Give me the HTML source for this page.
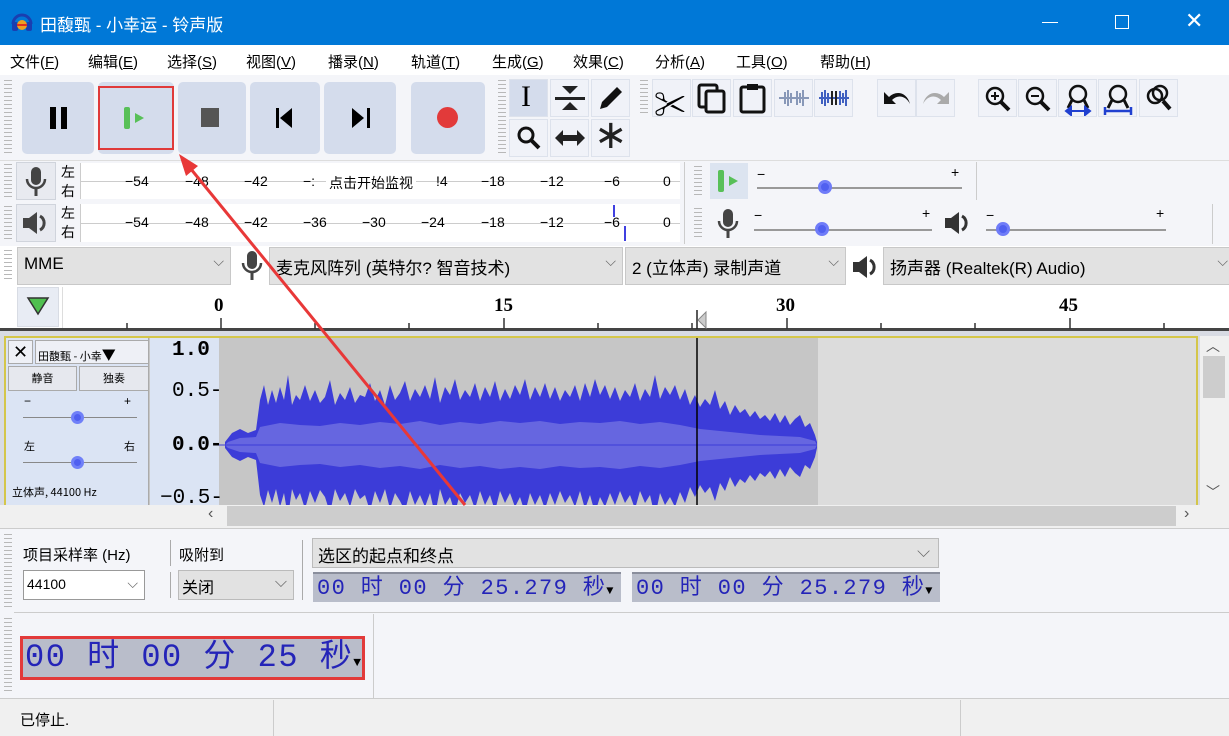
<!DOCTYPE html>
<html><head><meta charset="utf-8">
<style>
*{margin:0;padding:0;box-sizing:border-box}
body{width:1229px;height:736px;overflow:hidden;background:#f0f0f4;font-family:"Liberation Sans","Noto Sans CJK SC",sans-serif;position:relative;color:#000}
.a{position:absolute}
.btn{position:absolute;background:#d4dcec;border-radius:5px}
.tb{position:absolute;width:39px;height:38px;background:#f0f2f8;border:1px solid #dde2ec}
.grip{position:absolute;width:8px;background:repeating-linear-gradient(#b8b8b8 0 1px,transparent 1px 4px)}
.cb{position:absolute;background:#e2e2e2;border:1px solid #c8c8c8;font-size:17px;padding:6px 0 0 6px;height:38px}
.cb:after{content:"⌵";position:absolute;right:6px;top:5px;color:#666;font-size:14px}
.tc{position:absolute;background:#b9bdca;font-family:"Liberation Mono","Noto Sans CJK SC",monospace;color:#2424b8;white-space:nowrap;overflow:hidden}
.mt{position:absolute;font-size:14px;font-family:"Liberation Sans",sans-serif}
</style></head><body>
<div class="a" style="left:0;top:0;width:1229px;height:45px;background:#0078d7"></div>
<svg class="a" style="left:10px;top:10px" width="24" height="24" viewBox="0 0 24 24"><path d="M3 14 A9 9 0 0 1 21 14" stroke="#1a3fb0" stroke-width="3" fill="none"/><rect x="2" y="12" width="6" height="9" rx="2" fill="#1a3fb0"/><rect x="16" y="12" width="6" height="9" rx="2" fill="#1a3fb0"/><ellipse cx="12" cy="15" rx="5" ry="5" fill="#f0a020"/><rect x="7" y="14" width="10" height="2" fill="#e03020"/></svg>
<div class="a" style="left:40px;top:11px;color:#fff;font-size:17px">田馥甄 - 小幸运 - 铃声版</div>
<div class="a" style="left:1042px;top:22px;width:16px;height:1px;background:#fff"></div>
<div class="a" style="left:1115px;top:15px;width:14px;height:14px;border:1px solid #fff"></div>
<div class="a" style="left:1185px;top:8px;color:#fff;font-size:22px;font-weight:100">✕</div>
<div class="a" style="left:0;top:45px;width:1229px;height:30px;background:#fff;font-size:15px">
<span class="a" style="left:10px;top:6px">文件(<u>F</u>)</span><span class="a" style="left:88px;top:6px">编辑(<u>E</u>)</span><span class="a" style="left:167px;top:6px">选择(<u>S</u>)</span><span class="a" style="left:246px;top:6px">视图(<u>V</u>)</span><span class="a" style="left:328px;top:6px">播录(<u>N</u>)</span><span class="a" style="left:411px;top:6px">轨道(<u>T</u>)</span><span class="a" style="left:492px;top:6px">生成(<u>G</u>)</span><span class="a" style="left:573px;top:6px">效果(<u>C</u>)</span><span class="a" style="left:655px;top:6px">分析(<u>A</u>)</span><span class="a" style="left:736px;top:6px">工具(<u>O</u>)</span><span class="a" style="left:820px;top:6px">帮助(<u>H</u>)</span>
</div>
<div class="a" style="left:0;top:75px;width:1229px;height:85px;background:#f4f5f9"></div>
<div class="grip" style="left:4px;top:80px;height:75px"></div>
<div class="btn" style="left:22px;top:82px;width:72px;height:72px"></div>
<div class="a" style="left:50px;top:107px;width:6px;height:22px;background:#000"></div><div class="a" style="left:61px;top:107px;width:6px;height:22px;background:#000"></div>
<div class="btn" style="left:98px;top:82px;width:76px;height:72px"></div>
<svg class="a" style="left:120px;top:105px" width="30" height="26"><rect x="4" y="2" width="6" height="22" rx="2" fill="#58c058"/><path d="M15 8 L24 13 L15 18Z" fill="#58c058"/></svg>
<div class="a" style="left:98px;top:86px;width:76px;height:64px;border:2px solid #e03a3a"></div>
<div class="btn" style="left:178px;top:82px;width:68px;height:72px"></div>
<div class="a" style="left:201px;top:108px;width:18px;height:19px;background:#555"></div>
<div class="btn" style="left:250px;top:82px;width:70px;height:72px"></div>
<svg class="a" style="left:272px;top:106px" width="26" height="24"><rect x="4" y="2" width="3" height="20" fill="#000"/><path d="M20 2 L8 12 L20 22Z" fill="#000"/></svg>
<div class="btn" style="left:324px;top:82px;width:72px;height:72px"></div>
<svg class="a" style="left:348px;top:106px" width="26" height="24"><rect x="19" y="2" width="3" height="20" fill="#000"/><path d="M4 2 L16 12 L4 22Z" fill="#000"/></svg>
<div class="btn" style="left:411px;top:82px;width:74px;height:72px"></div>
<div class="a" style="left:437px;top:107px;width:21px;height:21px;border-radius:50%;background:#e23a3a"></div>
<div class="grip" style="left:498px;top:80px;height:75px"></div>
<div class="tb" style="left:509px;top:79px;background:#d4dcec"></div><div class="a" style="left:521px;top:80px;font-size:30px;font-family:'Liberation Serif'">I</div>
<div class="tb" style="left:550px;top:79px"></div><svg class="a" style="left:552px;top:82px" width="36" height="32"><path d="M10 4H26L18 12Z M10 28H26L18 20Z" fill="#222"/><rect x="3" y="15" width="30" height="3" fill="#222"/></svg>
<div class="tb" style="left:591px;top:79px"></div><svg class="a" style="left:596px;top:83px" width="30" height="30"><path d="M4 26 L6 19 L21 4 L26 9 L11 24Z" fill="#111"/></svg>
<div class="tb" style="left:509px;top:119px"></div><svg class="a" style="left:514px;top:123px" width="30" height="30"><circle cx="12" cy="12" r="7" stroke="#111" stroke-width="3" fill="none"/><path d="M17 17 L25 25" stroke="#111" stroke-width="4"/></svg>
<div class="tb" style="left:550px;top:119px"></div><svg class="a" style="left:553px;top:127px" width="34" height="22"><path d="M2 11 L10 3 V8 H24 V3 L32 11 L24 19 V14 H10 V19Z" fill="#222"/></svg>
<div class="tb" style="left:591px;top:119px"></div><div class="a" style="left:594px;top:112px;font-size:40px;color:#222">∗</div>
<div class="grip" style="left:640px;top:80px;height:36px"></div>
<div class="tb" style="left:652px;top:79px"></div><div class="a" style="left:654px;top:80px;font-size:32px">✂</div>
<div class="tb" style="left:692px;top:79px"></div><svg class="a" style="left:696px;top:82px" width="32" height="32"><rect x="3" y="3" width="18" height="22" rx="2" fill="none" stroke="#111" stroke-width="3"/><rect x="10" y="9" width="18" height="21" rx="2" fill="#f0f2f8" stroke="#111" stroke-width="3"/></svg>
<div class="tb" style="left:733px;top:79px"></div><svg class="a" style="left:738px;top:82px" width="30" height="32"><rect x="3" y="5" width="23" height="25" rx="2" fill="none" stroke="#111" stroke-width="3"/><rect x="9" y="2" width="11" height="6" fill="#111"/></svg>
<div class="tb" style="left:774px;top:79px"></div><svg class="a" style="left:777px;top:88px" width="34" height="20"><path d="M2 10H32" stroke="#8898b8" stroke-width="2"/><path d="M8 4V16M11 2V18M14 5V15M20 3V17M23 5V15M26 2V18" stroke="#8898b8" stroke-width="2"/></svg>
<div class="tb" style="left:814px;top:79px"></div><svg class="a" style="left:817px;top:88px" width="34" height="20"><path d="M2 10H32" stroke="#4060c0" stroke-width="2"/><path d="M5 4V16M8 2V18M11 5V15M23 3V17M26 5V15M29 2V18" stroke="#4060c0" stroke-width="2"/><path d="M15 3V17M19 3V17" stroke="#222" stroke-width="2"/></svg>
<div class="tb" style="left:877px;top:79px"></div><svg class="a" style="left:880px;top:86px" width="34" height="24"><path d="M4 6V18H16L12 14C18 8 26 10 30 18C27 6 16 4 9 11Z" fill="#111"/></svg>
<div class="tb" style="left:916px;top:79px"></div><svg class="a" style="left:919px;top:86px" width="34" height="24"><path d="M30 6V18H18L22 14C16 8 8 10 4 18C7 6 18 4 25 11Z" fill="#aaa"/></svg>
<div class="tb" style="left:978px;top:79px"></div><svg class="a" style="left:983px;top:84px" width="30" height="30"><circle cx="12" cy="12" r="8" stroke="#111" stroke-width="2.5" fill="none"/><path d="M18 18L26 26" stroke="#111" stroke-width="4"/><path d="M8 12H16M12 8V16" stroke="#111" stroke-width="2"/></svg>
<div class="tb" style="left:1018px;top:79px"></div><svg class="a" style="left:1023px;top:84px" width="30" height="30"><circle cx="12" cy="12" r="8" stroke="#111" stroke-width="2.5" fill="none"/><path d="M18 18L26 26" stroke="#111" stroke-width="4"/><path d="M8 12H16" stroke="#111" stroke-width="2"/></svg>
<div class="tb" style="left:1058px;top:79px"></div><svg class="a" style="left:1062px;top:82px" width="32" height="34"><circle cx="16" cy="12" r="8" stroke="#111" stroke-width="2.5" fill="none"/><path d="M10 18L6 26M22 18L26 26" stroke="#111" stroke-width="3"/><path d="M4 29H28M4 29L9 25V33ZM28 29L23 25V33Z" stroke="#2040d0" fill="#2040d0" stroke-width="2"/></svg>
<div class="tb" style="left:1098px;top:79px"></div><svg class="a" style="left:1102px;top:82px" width="32" height="34"><circle cx="16" cy="12" r="8" stroke="#111" stroke-width="2.5" fill="none"/><path d="M10 18L6 26M22 18L26 26" stroke="#111" stroke-width="3"/><path d="M3 29H29M3 25V33M29 25V33" stroke="#2040d0" stroke-width="2.5"/></svg>
<div class="tb" style="left:1139px;top:79px"></div><svg class="a" style="left:1143px;top:83px" width="32" height="32"><circle cx="12" cy="13" r="7" stroke="#111" stroke-width="2.5" fill="none"/><circle cx="17" cy="10" r="7" stroke="#111" stroke-width="2.5" fill="none"/><path d="M20 18L27 26" stroke="#111" stroke-width="4"/></svg>
<div class="a" style="left:0;top:160px;width:1229px;height:86px;background:#f4f5f9;border-top:1px solid #ddd"></div>
<div class="grip" style="left:4px;top:164px;height:34px"></div><div class="grip" style="left:4px;top:206px;height:34px"></div>
<div class="a" style="left:16px;top:162px;width:40px;height:38px;background:#e8eaf0;border:1px solid #d0d4dc"></div>
<svg class="a" style="left:24px;top:166px" width="24" height="32"><rect x="7" y="1" width="10" height="18" rx="5" fill="#444"/><path d="M3 13A9 9 0 0 0 21 13" stroke="#444" stroke-width="2.5" fill="none"/><path d="M12 22V30" stroke="#444" stroke-width="3"/></svg>
<div class="a" style="left:16px;top:204px;width:40px;height:38px;background:#e8eaf0;border:1px solid #d0d4dc"></div>
<svg class="a" style="left:20px;top:208px" width="30" height="30"><path d="M3 10H9L17 4V26L9 20H3Z" fill="#444"/><path d="M20 8A8 8 0 0 1 20 22" stroke="#444" stroke-width="3" fill="none"/></svg>
<div class="mt" style="left:61px;top:162px;font-family:'Noto Sans CJK SC'">左</div><div class="mt" style="left:61px;top:181px;font-family:'Noto Sans CJK SC'">右</div>
<div class="mt" style="left:61px;top:203px;font-family:'Noto Sans CJK SC'">左</div><div class="mt" style="left:61px;top:222px;font-family:'Noto Sans CJK SC'">右</div>
<div class="a" style="left:80px;top:163px;width:600px;height:36px;background:#fff;border-left:1px solid #ccc"></div>
<div class="a" style="left:80px;top:204px;width:600px;height:38px;background:#fff;border-left:1px solid #ccc"></div>
<div class="a" style="left:80px;top:181px;width:600px;height:1px;background:#ccc"></div>
<div class="a" style="left:80px;top:223px;width:600px;height:1px;background:#ccc"></div>
<div class="mt" style="left:125px;top:173px">−54</div><div class="mt" style="left:185px;top:173px">−48</div><div class="mt" style="left:244px;top:173px">−42</div><div class="mt" style="left:303px;top:173px">−:</div>
<div class="a" style="left:326px;top:173px;font-size:14px;background:#fff;padding:0 3px;font-family:'Noto Sans CJK SC'">点击开始监视</div>
<div class="mt" style="left:436px;top:173px">!4</div><div class="mt" style="left:481px;top:173px">−18</div><div class="mt" style="left:540px;top:173px">−12</div><div class="mt" style="left:604px;top:173px">−6</div><div class="mt" style="left:663px;top:173px">0</div>
<div class="mt" style="left:125px;top:214px">−54</div><div class="mt" style="left:185px;top:214px">−48</div><div class="mt" style="left:244px;top:214px">−42</div><div class="mt" style="left:303px;top:214px">−36</div><div class="mt" style="left:362px;top:214px">−30</div><div class="mt" style="left:421px;top:214px">−24</div><div class="mt" style="left:481px;top:214px">−18</div><div class="mt" style="left:540px;top:214px">−12</div><div class="mt" style="left:604px;top:214px">−6</div><div class="mt" style="left:663px;top:214px">0</div>
<div class="a" style="left:613px;top:205px;width:2px;height:12px;background:#4040e0"></div><div class="a" style="left:624px;top:226px;width:2px;height:15px;background:#4040e0"></div>
<div class="a" style="left:684px;top:162px;width:1px;height:82px;background:#ccc"></div>
<div class="grip" style="left:694px;top:166px;height:30px"></div><div class="grip" style="left:694px;top:208px;height:30px"></div>
<div class="a" style="left:710px;top:163px;width:38px;height:36px;background:#dce4f0"></div>
<svg class="a" style="left:714px;top:168px" width="30" height="26"><rect x="4" y="2" width="6" height="22" rx="2" fill="#58c058"/><path d="M15 8 L24 13 L15 18Z" fill="#58c058"/></svg>
<div class="a" style="left:757px;top:166px;font-size:14px">−</div><div class="a" style="left:951px;top:164px;font-size:14px">+</div>
<div class="a" style="left:757px;top:187px;width:205px;height:2px;background:#999"></div>
<div class="a" style="left:818px;top:180px;width:14px;height:14px;border-radius:50%;background:#5060f0;border:3px solid #6f7cf8"></div>
<div class="a" style="left:976px;top:162px;width:1px;height:38px;background:#ccc"></div>
<svg class="a" style="left:716px;top:208px" width="24" height="32"><rect x="7" y="1" width="10" height="18" rx="5" fill="#444"/><path d="M3 13A9 9 0 0 0 21 13" stroke="#444" stroke-width="2.5" fill="none"/><path d="M12 22V30" stroke="#444" stroke-width="3"/></svg>
<div class="a" style="left:754px;top:207px;font-size:14px">−</div><div class="a" style="left:922px;top:205px;font-size:14px">+</div>
<div class="a" style="left:754px;top:229px;width:178px;height:2px;background:#999"></div>
<div class="a" style="left:815px;top:222px;width:14px;height:14px;border-radius:50%;background:#5060f0;border:3px solid #6f7cf8"></div>
<svg class="a" style="left:942px;top:208px" width="30" height="30"><path d="M3 10H9L17 4V26L9 20H3Z" fill="#333"/><path d="M20 8A8 8 0 0 1 20 22" stroke="#333" stroke-width="3" fill="none"/></svg>
<div class="a" style="left:986px;top:207px;font-size:14px">−</div><div class="a" style="left:1156px;top:205px;font-size:14px">+</div>
<div class="a" style="left:986px;top:229px;width:180px;height:2px;background:#999"></div>
<div class="a" style="left:996px;top:222px;width:14px;height:14px;border-radius:50%;background:#5060f0;border:3px solid #6f7cf8"></div>
<div class="a" style="left:1212px;top:204px;width:1px;height:40px;background:#ccc"></div>
<div class="a" style="left:0;top:246px;width:1229px;height:40px;background:#fff"></div>
<div class="grip" style="left:4px;top:250px;height:32px"></div>
<div class="cb" style="left:17px;top:247px;width:214px">MME</div>
<svg class="a" style="left:240px;top:250px" width="24" height="32"><rect x="7" y="1" width="10" height="18" rx="5" fill="#444"/><path d="M3 13A9 9 0 0 0 21 13" stroke="#444" stroke-width="2.5" fill="none"/><path d="M12 22V30" stroke="#444" stroke-width="3"/></svg>
<div class="cb" style="left:269px;top:247px;width:354px">麦克风阵列 (英特尔? 智音技术)</div>
<div class="cb" style="left:625px;top:247px;width:221px">2 (立体声) 录制声道</div>
<svg class="a" style="left:850px;top:252px" width="30" height="30"><path d="M3 10H9L17 4V26L9 20H3Z" fill="#333"/><path d="M20 8A8 8 0 0 1 20 22" stroke="#333" stroke-width="3" fill="none"/></svg>
<div class="cb" style="left:883px;top:247px;width:352px">扬声器 (Realtek(R) Audio)</div>
<div class="a" style="left:0;top:286px;width:1229px;height:44px;background:#fff"></div>
<div class="a" style="left:17px;top:287px;width:42px;height:40px;background:#e8ecf4;border:1px solid #d8dce4"></div>
<svg class="a" style="left:26px;top:296px" width="24" height="20"><path d="M2 2H22L12 18Z" fill="#50c050" stroke="#333" stroke-width="1.5"/></svg>
<div class="a" style="left:62px;top:287px;width:1px;height:42px;background:#ddd"></div>
<div class="a" style="left:0;top:328px;width:1229px;height:3px;background:#444"></div>
<div class="a" style="left:214px;top:295px;font-size:19px;font-weight:bold;font-family:'Liberation Serif'">0</div>
<div class="a" style="left:494px;top:295px;font-size:19px;font-weight:bold;font-family:'Liberation Serif'">15</div>
<div class="a" style="left:776px;top:295px;font-size:19px;font-weight:bold;font-family:'Liberation Serif'">30</div>
<div class="a" style="left:1059px;top:295px;font-size:19px;font-weight:bold;font-family:'Liberation Serif'">45</div>
<svg class="a" style="left:0;top:310px" width="1229" height="19"><g stroke="#333" stroke-width="1.5"><path d="M127 13V19M221 8V19M315 13V19M409 13V19M504 8V19M598 13V19M692 13V19M787 8V19M881 13V19M975 13V19M1070 8V19M1164 13V19"/></g><path d="M697 0V19" stroke="#222" stroke-width="1.5"/><path d="M706 2L698 10L706 18Z" fill="#ccc" stroke="#888"/></svg>
<div class="a" style="left:0;top:331px;width:1229px;height:174px;background:#d8dbe3"></div>
<div class="a" style="left:4px;top:336px;width:1194px;height:169px;border:2px solid #d4c64a;border-bottom:none;background:#c6c6c6"></div>
<div class="a" style="left:6px;top:338px;width:143px;height:167px;background:#dbe4f4;border-right:1px solid #aaa"></div>
<div class="a" style="left:8px;top:340px;width:25px;height:24px;background:#eef0f6;border:1px solid #aaa;font-size:18px;text-align:center;line-height:22px">✕</div>
<div class="a" style="left:35px;top:340px;width:114px;height:24px;background:#eef0f6;border:1px solid #aaa;font-size:11px;padding:4px 2px;font-family:'Noto Sans CJK SC'">田馥甄 - 小幸<span style="font-size:14px">▼</span></div>
<div class="a" style="left:8px;top:366px;width:69px;height:25px;background:#e6e8ee;border:1px solid #aaa;font-size:11px;text-align:center;line-height:23px;font-family:'Noto Sans CJK SC'">静音</div>
<div class="a" style="left:79px;top:366px;width:70px;height:25px;background:#e6e8ee;border:1px solid #aaa;font-size:11px;text-align:center;line-height:23px;font-family:'Noto Sans CJK SC'">独奏</div>
<div class="a" style="left:24px;top:394px;font-size:12px">−</div><div class="a" style="left:124px;top:394px;font-size:12px">+</div>
<div class="a" style="left:23px;top:417px;width:114px;height:1px;background:#888"></div>
<div class="a" style="left:71px;top:411px;width:13px;height:13px;border-radius:50%;background:#5060f0;border:3px solid #7080f8"></div>
<div class="a" style="left:24px;top:438px;font-size:11px;font-family:'Noto Sans CJK SC'">左</div><div class="a" style="left:124px;top:438px;font-size:11px;font-family:'Noto Sans CJK SC'">右</div>
<div class="a" style="left:23px;top:462px;width:114px;height:1px;background:#888"></div>
<div class="a" style="left:71px;top:456px;width:13px;height:13px;border-radius:50%;background:#5060f0;border:3px solid #7080f8"></div>
<div class="a" style="left:12px;top:484px;font-size:11px;font-family:'Noto Sans CJK SC'">立体声, 44100 Hz</div>
<div class="a" style="left:150px;top:338px;width:69px;height:167px;background:#dbe4f4"></div>
<div class="a" style="left:172px;top:339px;font-size:21px;font-weight:bold;font-family:'Liberation Mono'">1.0</div>
<div class="a" style="left:172px;top:380px;font-size:21px;font-family:'Liberation Mono'">0.5-</div>
<div class="a" style="left:172px;top:434px;font-size:21px;font-weight:bold;font-family:'Liberation Mono'">0.0-</div>
<div class="a" style="left:160px;top:487px;font-size:21px;font-family:'Liberation Mono'">−0.5-</div>
<div class="a" style="left:818px;top:338px;width:378px;height:167px;background:#dcdcdc"></div>
<svg class="a" style="left:0;top:0" width="1229" height="505" viewBox="0 0 1229 505">
<defs><clipPath id="c"><rect x="219" y="338" width="600" height="167"/></clipPath></defs>
<g clip-path="url(#c)">
<g transform="translate(0,445)">
<path fill="#3c3cd8" d="M225,0 L225,-3 232,-12 240,-16 248,-12 256,-15 260,-45 264,-60 268,-40 272,-55 276,-42 280,-58 284,-45 288,-70 292,-40 296,-50 300,-45 305,-60 310,-44 315,-55 320,-42 325,-48 330,-65 335,-40 340,-52 345,-45 350,-58 355,-42 360,-50 365,-48 370,-62 375,-44 380,-55 385,-40 390,-60 395,-45 400,-52 405,-64 410,-44 415,-56 420,-48 425,-60 430,-46 435,-68 440,-42 445,-58 450,-50 455,-66 460,-45 465,-55 470,-48 475,-62 480,-44 485,-58 490,-48 495,-64 500,-44 505,-56 510,-46 515,-60 520,-50 525,-66 530,-45 535,-58 540,-48 545,-62 550,-46 555,-58 560,-44 565,-55 570,-48 575,-60 580,-44 585,-62 590,-48 595,-66 600,-50 605,-60 610,-46 615,-58 620,-44 625,-55 630,-48 635,-62 640,-44 645,-56 650,-48 655,-70 660,-46 665,-58 670,-50 675,-60 680,-45 685,-56 690,-40 695,-50 700,-38 705,-46 710,-40 715,-55 720,-36 725,-44 730,-30 735,-40 740,-32 745,-36 750,-28 755,-34 760,-26 765,-30 770,-24 775,-32 780,-22 785,-30 790,-20 795,-26 800,-30 805,-18 810,-22 815,-10 817,-3 817,0Z"/>
<path fill="#6666e0" d="M225,0 L228,-3 240,-7 256,-8 260,-18 280,-22 300,-20 320,-19 340,-22 360,-20 380,-23 400,-21 420,-24 440,-20 460,-23 480,-21 500,-24 520,-22 540,-24 560,-21 580,-23 600,-22 620,-24 640,-21 660,-23 680,-20 700,-16 720,-14 740,-12 760,-10 780,-9 800,-8 815,-4 817,0Z"/>
</g>
<g transform="translate(0,445) scale(1,-1)">
<path fill="#3c3cd8" d="M225,0 L225,-3 232,-12 240,-16 248,-12 256,-15 260,-50 264,-62 268,-45 272,-58 276,-44 280,-62 284,-48 288,-72 292,-44 296,-55 300,-48 305,-64 310,-46 315,-58 320,-45 325,-52 330,-68 335,-44 340,-56 345,-48 350,-62 355,-44 360,-54 365,-50 370,-66 375,-46 380,-58 385,-44 390,-64 395,-48 400,-56 405,-66 410,-46 415,-60 420,-50 425,-62 430,-48 435,-70 440,-44 445,-60 450,-52 455,-68 460,-48 465,-58 470,-50 475,-64 480,-46 485,-60 490,-50 495,-66 500,-46 505,-58 510,-48 515,-62 520,-52 525,-68 530,-48 535,-60 540,-50 545,-64 550,-48 555,-60 560,-46 565,-58 570,-50 575,-62 580,-46 585,-64 590,-50 595,-68 600,-52 605,-62 610,-48 615,-60 620,-46 625,-58 630,-50 635,-64 640,-46 645,-58 650,-50 655,-72 660,-48 665,-60 670,-52 675,-62 680,-47 685,-58 690,-42 695,-52 700,-40 705,-48 710,-42 715,-56 720,-38 725,-46 730,-32 735,-42 740,-34 745,-38 750,-30 755,-36 760,-28 765,-32 770,-26 775,-34 780,-24 785,-32 790,-22 795,-28 800,-32 805,-20 810,-24 815,-12 817,-3 817,0Z"/>
<path fill="#6666e0" d="M225,0 L228,-3 240,-7 256,-8 260,-18 280,-22 300,-20 320,-19 340,-22 360,-20 380,-23 400,-21 420,-24 440,-20 460,-23 480,-21 500,-24 520,-22 540,-24 560,-21 580,-23 600,-22 620,-24 640,-21 660,-23 680,-20 700,-16 720,-14 740,-12 760,-10 780,-9 800,-8 815,-4 817,0Z"/>
</g>
</g>
<path d="M219 445H817" stroke="#3c3cd8" stroke-width="1"/>
<path d="M697 338V505" stroke="#000" stroke-width="1.5"/>
</svg>
<div class="a" style="left:1200px;top:336px;width:29px;height:169px;background:#f0f0f0"></div>
<div class="a" style="left:1206px;top:336px;font-size:14px;color:#555">︿</div>
<div class="a" style="left:1203px;top:356px;width:22px;height:42px;background:#cdcdcd"></div>
<div class="a" style="left:1206px;top:482px;font-size:14px;color:#555">﹀</div>
<div class="a" style="left:0;top:505px;width:1229px;height:23px;background:#f0f0f0"></div>
<div class="a" style="left:227px;top:506px;width:949px;height:20px;background:#cdcdcd"></div>
<div class="a" style="left:208px;top:505px;font-size:16px;color:#555">‹</div>
<div class="a" style="left:1184px;top:505px;font-size:16px;color:#555">›</div>
<div class="a" style="left:0;top:528px;width:1229px;height:170px;background:#f4f5f9"></div>
<div class="a" style="left:0;top:528px;width:1229px;height:1px;background:#ccc"></div>
<div class="grip" style="left:4px;top:534px;height:76px"></div>
<div class="a" style="left:23px;top:544px;font-size:15px">项目采样率 (Hz)</div>
<div class="a" style="left:170px;top:540px;width:1px;height:26px;background:#aaa"></div>
<div class="a" style="left:179px;top:544px;font-size:15px">吸附到</div>
<div class="a" style="left:23px;top:570px;width:122px;height:30px;background:#fff;border:1px solid #999;font-size:14px;padding:5px 3px">44100<span class="a" style="right:6px;top:4px;color:#666">⌵</span></div>
<div class="a" style="left:170px;top:572px;width:1px;height:26px;background:#aaa"></div>
<div class="a" style="left:178px;top:570px;width:116px;height:30px;background:#e2e2e2;border:1px solid #bbb;font-size:16px;padding:3px 3px">关闭<span class="a" style="right:6px;top:3px;color:#666">⌵</span></div>
<div class="a" style="left:302px;top:540px;width:1px;height:60px;background:#aaa"></div>
<div class="a" style="left:312px;top:538px;width:627px;height:30px;background:#e2e2e2;border:1px solid #bbb;font-size:17px;padding:3px 5px">选区的起点和终点<span class="a" style="right:8px;top:3px;color:#666">⌵</span></div>
<div class="tc" style="left:313px;top:572px;width:308px;height:30px;font-size:22px;line-height:30px;padding-left:4px;border-top:2px solid #8a8e9c;letter-spacing:1.4px">00 时 00 分 25.279 秒<span style="color:#000;font-size:12px">▼</span></div>
<div class="tc" style="left:632px;top:572px;width:308px;height:30px;font-size:22px;line-height:30px;padding-left:4px;border-top:2px solid #8a8e9c;letter-spacing:1.4px">00 时 00 分 25.279 秒<span style="color:#000;font-size:12px">▼</span></div>
<div class="a" style="left:14px;top:612px;width:1215px;height:1px;background:#ccc"></div>
<div class="grip" style="left:4px;top:618px;height:76px"></div>
<div class="a" style="left:373px;top:614px;width:1px;height:84px;background:#ccc"></div>
<div class="tc" style="left:20px;top:636px;width:345px;height:44px;font-size:32px;line-height:38px;padding-left:2px;border:3px solid #e23a3a;letter-spacing:1.5px">00 时 00 分 25 秒<span style="color:#000;font-size:13px">▼</span></div>
<div class="a" style="left:0;top:698px;width:1229px;height:38px;background:#f0f0f0;border-top:1px solid #ccc"></div>
<div class="a" style="left:20px;top:709px;font-size:15px">已停止.</div>
<div class="a" style="left:273px;top:700px;width:1px;height:36px;background:#ccc"></div>
<div class="a" style="left:960px;top:700px;width:1px;height:36px;background:#ccc"></div>
<svg class="a" style="left:0;top:0" width="1229" height="736"><path d="M465 505 L186 163" stroke="#e83838" stroke-width="3"/><path d="M179 154 L198 166 L186 176Z" fill="#e83838"/></svg>
</body></html>
